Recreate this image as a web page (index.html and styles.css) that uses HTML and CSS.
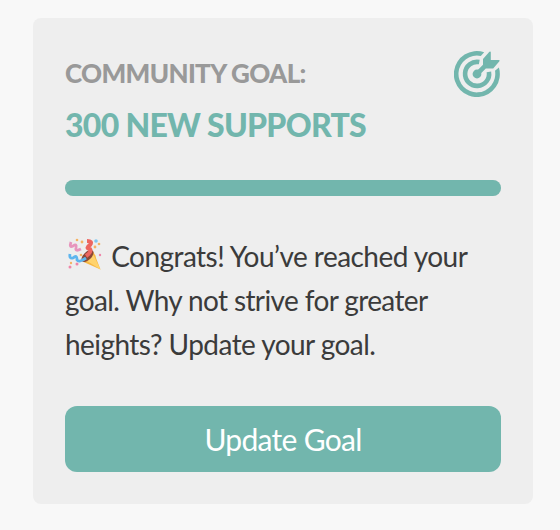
FILE: index.html
```html
<!DOCTYPE html>
<html lang="en">
<head>
    <meta charset="UTF-8">
    <meta name="viewport" content="width=device-width, initial-scale=1.0">
    <title>Community Goal</title>
    <link rel="stylesheet" href="styles.css">
</head>
<body>
    <section class="goal-card">
        <header class="goal-header">
            <div>
                <h2 class="goal-label">COMMUNITY GOAL:</h2>
                <h1 class="goal-title">300 NEW SUPPORTS</h1>
            </div>
            <!-- Target icon -->
            <svg class="goal-icon" viewBox="0 0 46 46" aria-hidden="true">
                <path d="M30.2 1.3A23 23 0 1 0 44.9 16.6L41 19.8A18.4 18.4 0 1 1 26.8 5Z"/>
                <path class="ring" d="M25.3 11.1A12 12 0 1 0 34.9 20.8"/>
                <circle cx="23" cy="23" r="4.4"/>
                <path d="M29 8 35.4 .8Q36.6 0 36.8 1.3V9H44.6Q46.2 9.1 45.4 10.3L39.2 17.5H31.8L24.8 24.5 21.5 21.2 29 13.8Z"/>
            </svg>
        </header>

        <div class="progress"><div class="progress-bar"></div></div>

        <p class="message">
            <!-- Party popper -->
            <svg class="popper" viewBox="0 0 34 34" role="img" aria-label="Party popper">
                <path fill="#f7b844" d="M32.5 31.5 14.5 23.5 17 17 23 12Q27 14 28 20Z"/>
                <path fill="#ffd36c" d="M32.5 31.5 19 23 23 15 26 18Z"/>
                <ellipse cx="19.5" cy="18" rx="7.5" ry="4" transform="rotate(-45 19.5 18)" fill="#8a4938"/>
                <path class="ribbon pink" d="M3 4Q1 10 5 8Q9 5 8 10Q7 14 13 11"/>
                <path class="ribbon red" d="M19 3Q25 3 22 7Q17 10 22 11Q24 14 18 18"/>
                <path class="ribbon blue" d="M2 16Q1 21 5 20Q9 16 9 22Q11 25 18 20"/>
                <g fill="#f5b363">
                    <circle cx="9" cy="2" r="1.3"/>
                    <circle cx="14" cy="4" r="1.4"/>
                    <circle cx="27" cy="9" r="1.4"/>
                    <circle cx="31" cy="6" r="1.3"/>
                    <circle cx="3" cy="25" r="1.2"/>
                    <circle cx="13" cy="17" r="1.3"/>
                </g>
                <g fill="#ef86a9">
                    <circle cx="9" cy="26" r="1.5"/>
                    <circle cx="2" cy="29" r="1.5"/>
                    <circle cx="32" cy="17" r="1.2"/>
                </g>
                <circle cx="28" cy="3" r="1.8" fill="#80c8ef"/>
            </svg>
            <span class="line line-one">Congrats! You’ve reached your</span><br>
            <span class="line line-two">goal. Why not strive for greater</span><br>
            <span class="line line-three">heights? Update your goal.</span>
        </p>

        <button class="update-button" type="button">Update Goal</button>
    </section>
</body>
</html>
```
FILE: styles.css
```css
* {
    box-sizing: border-box;
    margin: 0;
    padding: 0;
}

body {
    padding: 18px 27px 26px 33px;
    background-color: #f8f8f8;
    font-family: Lato, "Liberation Sans", sans-serif;
}

.goal-card {
    height: 486px;
    padding: 32px;
    border-radius: 8px;
    background-color: #eee;
}

.goal-header {
    display: flex;
    justify-content: space-between;
    height: 130px;
    white-space: nowrap;
}

.goal-label {
    color: #999;
    font-size: 26px;
    font-weight: 900;
    line-height: 46px;
    letter-spacing: -0.65px;
}

.goal-title {
    color: #72b6ad;
    font-size: 32px;
    font-weight: 900;
    line-height: 58px;
    letter-spacing: -0.72px;
}

.goal-icon {
    flex: none;
    width: 46px;
    height: 46px;
    margin: 1px 1px 0 0;
    fill: #72b6ad;
}

.ring {
    fill: none;
    stroke: #72b6ad;
    stroke-width: 4.6;
}

.progress {
    height: 16px;
    border-radius: 8px;
    background-color: #ddd;
}

.progress-bar {
    width: 100%;
    height: 100%;
    border-radius: 8px;
    background-color: #72b6ad;
}

.message {
    height: 132px;
    margin: 38px 0 40px;
    color: #3b3b3b;
    font-size: 28px;
    line-height: 44px;
    white-space: nowrap;
}

.popper {
    width: 34px;
    height: 34px;
    margin: 0 2px 0 3px;
    vertical-align: -5px;
}

.ribbon {
    fill: none;
    stroke-width: 2.8;
}

.pink {
    stroke: #e795bd;
}

.red {
    stroke: #ed6660;
    stroke-width: 4;
}

.blue {
    stroke: #5eb5ee;
}

.line-one {
    letter-spacing: -0.54px;
}

.line-two {
    letter-spacing: -0.62px;
}

.line-three {
    letter-spacing: -0.56px;
}

.update-button {
    display: block;
    width: 100%;
    height: 66px;
    border: none;
    border-radius: 12px;
    background-color: #72b6ad;
    color: #fff;
    font-family: inherit;
    font-size: 30px;
    letter-spacing: -0.7px;
    cursor: pointer;
}
```
